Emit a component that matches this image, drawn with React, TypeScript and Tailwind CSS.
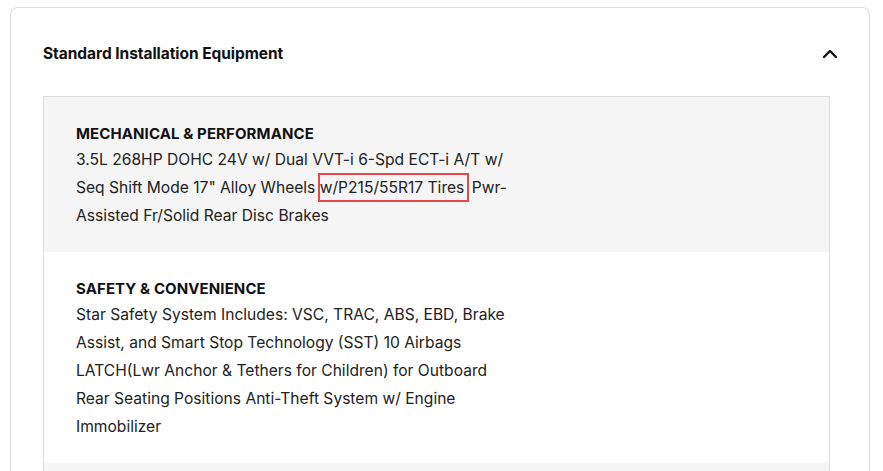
import { ChevronUp } from 'lucide-react'

const sections = [
  {
    title: 'MECHANICAL & PERFORMANCE',
    shaded: true,
    body: (
      <>
        3.5L 268HP DOHC 24V w/ Dual VVT-i 6-Spd ECT-i A/T w/ Seq Shift Mode 17" Alloy Wheels{' '}
        <span className="outline-2 outline-solid outline-[#e5484d] py-[3px] pr-[3px]">w/P215/55R17 Tires</span> Pwr-Assisted
        Fr/Solid Rear Disc Brakes
      </>
    ),
  },
  {
    title: 'SAFETY & CONVENIENCE',
    shaded: false,
    body: (
      <>
        Star Safety System Includes: VSC, TRAC, ABS, EBD, Brake Assist, and Smart Stop Technology (SST) 10 Airbags
        LATCH(Lwr Anchor &amp; Tethers for Children) for Outboard Rear Seating Positions Anti-Theft System w/ Engine
        Immobilizer
      </>
    ),
  },
  {
    title: 'EXTERIOR',
    shaded: true,
    body: <>Halogen Headlamps Color-Keyed Pwr Mirrors Intermittent Windshield Wipers</>,
  },
]

export default function App() {
  return (
    <div className="h-[471px] overflow-hidden bg-white pt-[7px] pl-[10px] pr-[13px] font-['Inter',sans-serif] text-[#111]">
      <div className="rounded-t-lg border border-b-0 border-[#dedede] pl-[32px] pr-[39px]">
        <div className="flex items-center justify-between pt-[34px] pb-[30px]">
          <h2 className="text-[15.5px] leading-5 font-bold tracking-[-0.05px]">Standard Installation Equipment</h2>
          <ChevronUp className="mr-[-12px] h-6 w-6" strokeWidth={2.4} />
        </div>
        <div className="border-x border-t border-[#dedede]">
          {sections.map(s => (
            <div key={s.title} className={(s.shaded ? 'bg-[#f5f5f5]' : 'bg-white') + ' pt-[27px] pb-[22px] pl-[32px]'}>
              <h3 className="text-[15px] leading-5 font-bold tracking-[0.1px]">{s.title}</h3>
              <p className="mt-[2px] w-[440px] text-[15.6px] leading-[28px] text-[#222]">{s.body}</p>
            </div>
          ))}
        </div>
      </div>
    </div>
  )
}
